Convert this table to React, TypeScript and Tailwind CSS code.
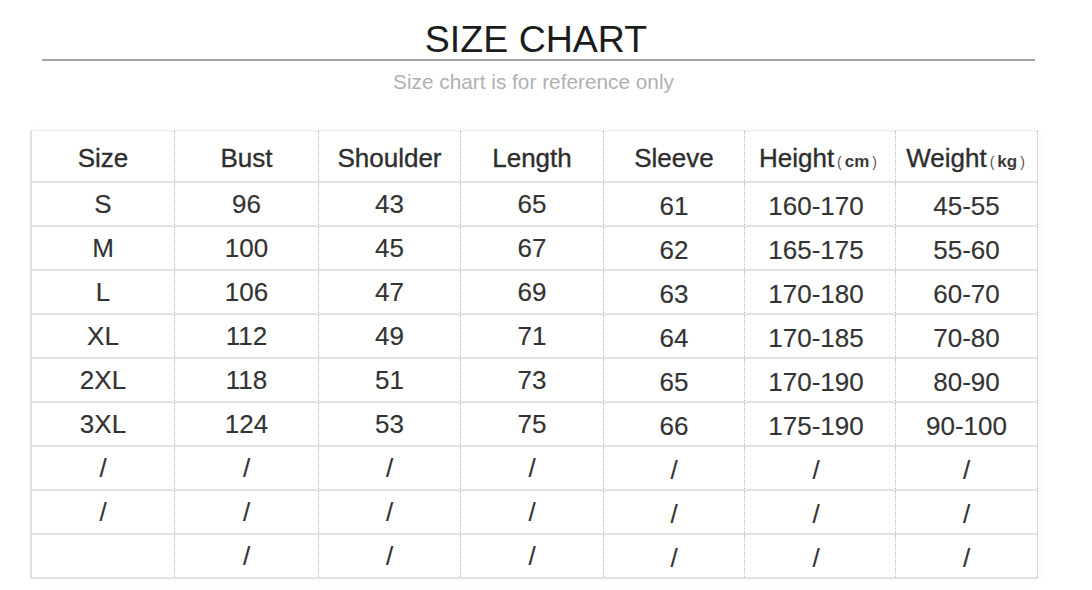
import React from "react";

const cols = ["w-[143px]", "w-[144px]", "w-[142px]", "w-[143px]", "w-[141px]", "w-[151px]", "w-[142px]"];

const rows: string[][] = [
  ["S", "96", "43", "65", "61", "160-170", "45-55"],
  ["M", "100", "45", "67", "62", "165-175", "55-60"],
  ["L", "106", "47", "69", "63", "170-180", "60-70"],
  ["XL", "112", "49", "71", "64", "170-185", "70-80"],
  ["2XL", "118", "51", "73", "65", "170-190", "80-90"],
  ["3XL", "124", "53", "75", "66", "175-190", "90-100"],
  ["/", "/", "/", "/", "/", "/", "/"],
  ["/", "/", "/", "/", "/", "/", "/"],
  ["", "/", "/", "/", "/", "/", "/"],
];

function Unit({ u }: { u: string }) {
  return (
    <span className="inline-flex items-baseline">
      <span className="text-[14px] ml-[3px] text-[#555] [-webkit-text-stroke:0px]">(</span>
      <span className="text-[17px] font-bold mx-[3px] text-[#3a3a3a] [-webkit-text-stroke:0px]">{u}</span>
      <span className="text-[14px] text-[#555] [-webkit-text-stroke:0px]">)</span>
    </span>
  );
}

const headers: React.ReactNode[] = [
  "Size",
  "Bust",
  "Shoulder",
  "Length",
  "Sleeve",
  <span key="h" className="inline-flex items-baseline -ml-[4px]">
    Height
    <Unit u="cm" />
  </span>,
  <span key="w" className="inline-flex items-baseline -ml-[2px]">
    Weight
    <Unit u="kg" />
  </span>,
];

export default function App() {
  return (
    <div className="w-[1092px] h-[590px] bg-white overflow-hidden font-['Liberation_Sans',Arial,sans-serif]">
      <div className="pt-[20px] pr-[20px] flex flex-col items-center">
        <div className="text-[37.5px] leading-[38px] text-[#1c1c1c]">SIZE CHART</div>
      </div>
      <div className="mt-[1px] ml-[42px] w-[993px] h-[2px] bg-[#a3a3a3]" />
      <div className="mt-[10px] pr-[25px] flex justify-center">
        <div className="text-[20.8px] leading-[21px] text-[#b0b0b0]">Size chart is for reference only</div>
      </div>
      <div className="mt-[38px] ml-[30px] w-[1008px] border-l-2 border-t border-l-[#e0e0e0] border-t-[#ececec] shadow-[2px_0_10px_rgba(0,0,0,0.03)]">
        <div className="flex h-[52px] border-b-2 border-[#e2e2e2]">
          {headers.map((h, i) => (
            <div
              key={i}
              className={`${cols[i]} flex items-center justify-center pt-[4px] border-r border-dotted border-r-[#b8b8b8] text-[26px] leading-none text-[#2e2e2e] [-webkit-text-stroke:0.35px_#2e2e2e] whitespace-nowrap`}
            >
              {h}
            </div>
          ))}
        </div>
        {rows.map((r, ri) => (
          <div key={ri} className="flex h-[44px] border-b-2 border-[#e2e2e2]">
            {r.map((c, ci) => (
              <div
                key={ci}
                className={`${cols[ci]} flex items-center justify-center ${ci >= 4 ? "pt-[4px]" : "pt-0"} ${ci === 5 ? "pr-[8px]" : "pr-0"} border-r border-dotted border-r-[#b8b8b8] text-[26px] leading-none text-[#333] [-webkit-text-stroke:0.15px_#333]`}
              >
                {c}
              </div>
            ))}
          </div>
        ))}
      </div>
    </div>
  );
}
